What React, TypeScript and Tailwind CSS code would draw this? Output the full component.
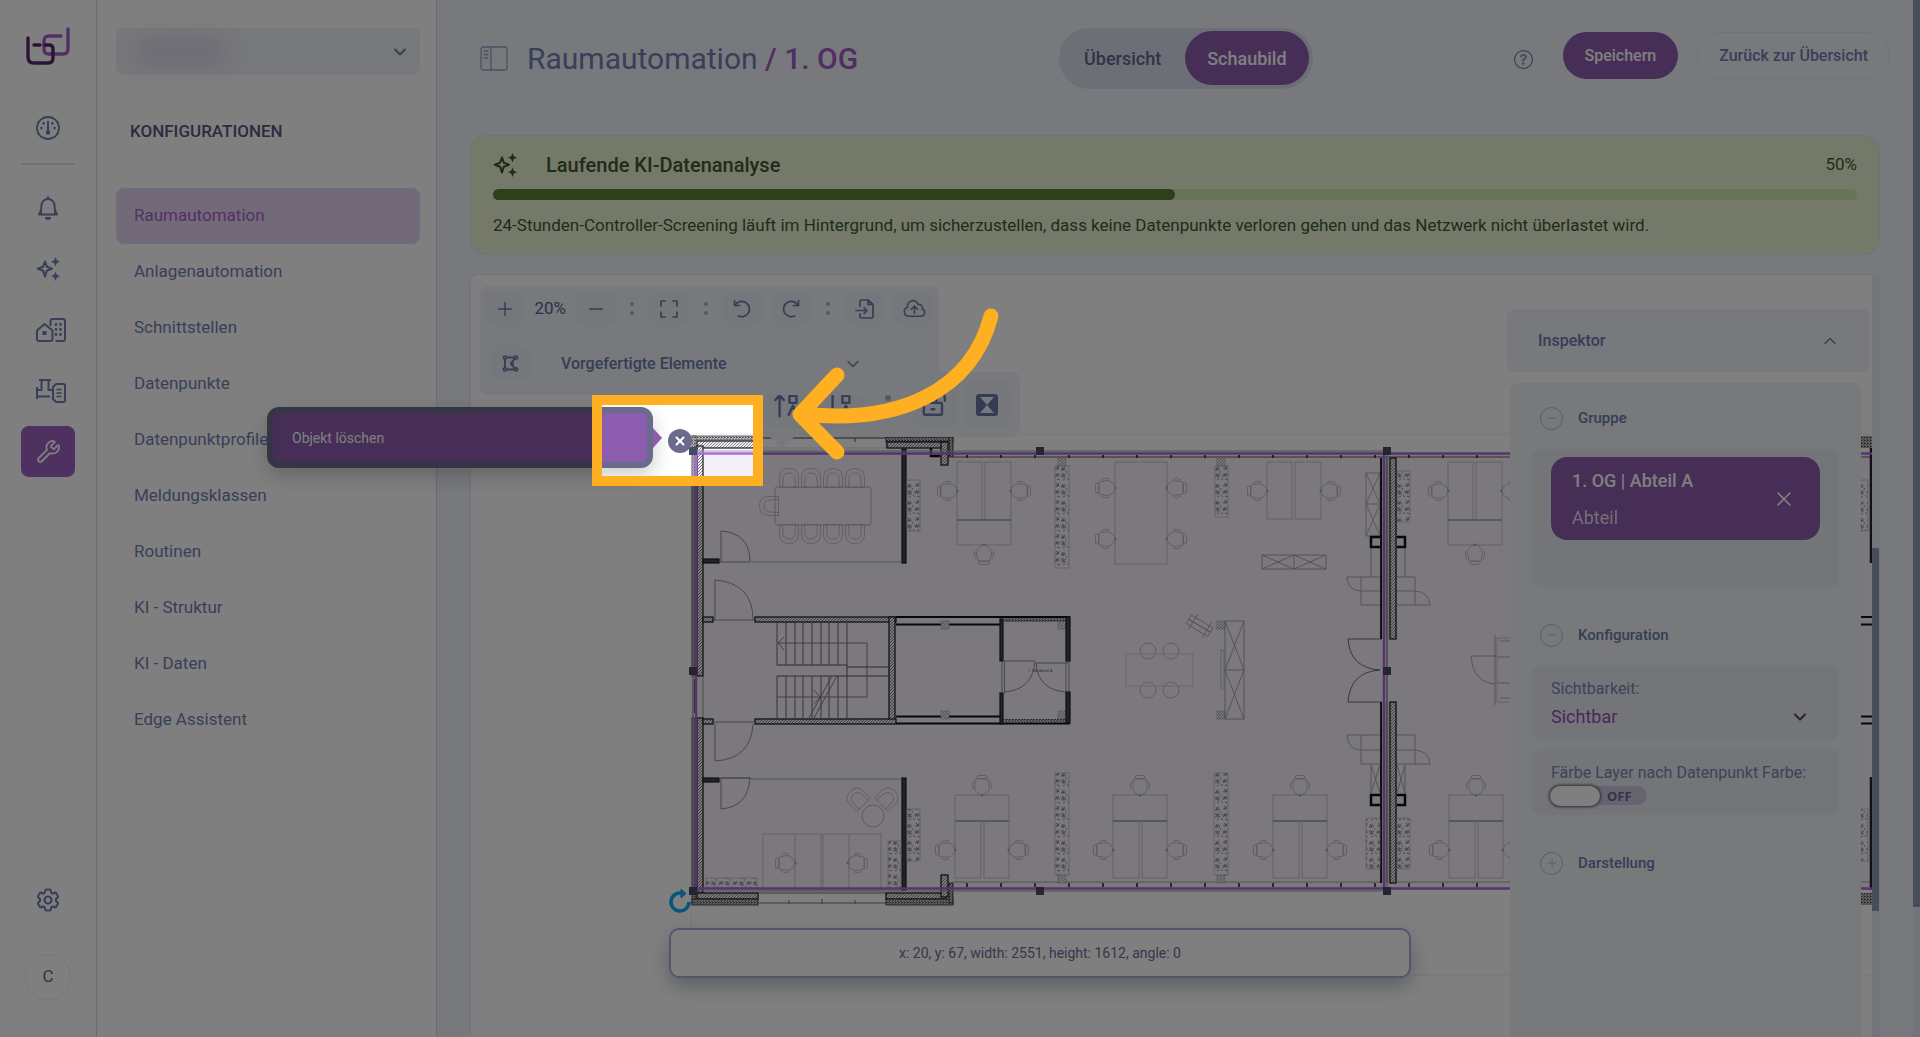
import type { ReactNode } from "react";
import { Wrench, ChevronDown, ChevronUp, X, Plus, Minus } from "lucide-react";
import { HiOutlineCog6Tooth, HiOutlineCloudArrowUp } from "react-icons/hi2";
import { BsQuestionCircle } from "react-icons/bs";

const navItems = [
  "Raumautomation",
  "Anlagenautomation",
  "Schnittstellen",
  "Datenpunkte",
  "Datenpunktprofile",
  "Meldungsklassen",
  "Routinen",
  "KI - Struktur",
  "KI - Daten",
  "Edge Assistent",
];

/* ---------- icons ---------- */

function Logo() {
  return (
    <svg width="46" height="40" viewBox="0 0 46 40" fill="none" strokeWidth="3.4" strokeLinecap="round" strokeLinejoin="round">
      <path d="M43 2v20q0 5-5 5H24q-5 0-5-5v-8q0-5 5-5h12" stroke="#a05fc6" />
      <path d="M3 11v19q0 6 6 6h14q5 0 5-5V22q0-4-4-4H20M9 18h6" stroke="#56286e" />
    </svg>
  );
}

function GaugeIcon() {
  return (
    <svg width="24" height="24" viewBox="0 0 24 24" fill="none" stroke="currentColor" strokeWidth="1.8">
      <circle cx="12" cy="12" r="11" />
      <path d="M12 5v10" strokeWidth="2" />
      <circle cx="12" cy="16.5" r="2.3" fill="currentColor" stroke="none" />
      <g fill="currentColor" stroke="none">
        <circle cx="7.6" cy="7.4" r="1.3" />
        <circle cx="16.4" cy="7.4" r="1.3" />
        <circle cx="5.4" cy="12" r="1.3" />
        <circle cx="18.6" cy="12" r="1.3" />
      </g>
    </svg>
  );
}

function BellIcon() {
  return (
    <svg width="24" height="24" viewBox="0 0 24 24" fill="none" stroke="currentColor" strokeWidth="2" strokeLinejoin="round" strokeLinecap="round">
      <path d="M3 18.500h18M5 18v-3.500l.5-5a6.500 6.500 0 0 1 13 0l.5 5V18M5 14.500L3 18.500M19 14.500l2 4M12 3V1.200" />
      <path d="M9 21h6a3 3 0 0 1-6 0z" fill="currentColor" stroke="none" />
    </svg>
  );
}

function SparkleIcon() {
  return (
    <svg width="24" height="24" viewBox="0 0 24 24" fill="none">
      <path d="M9 4.500l1.800 5.200 5.200 2-5.200 2L9 19.500l-1.900-5.800-5.300-2 5.300-2z" stroke="currentColor" strokeWidth="2.100" strokeLinejoin="round" />
      <path d="M19.500 0l1.400 3.300 3.100 1.400-3.100 1.400-1.400 3.300-1.400-3.300-3.100-1.400 3.100-1.400zM19.500 14.500l1.400 3.300 3.100 1.400-3.100 1.400-1.400 3.300-1.400-3.300-3.100-1.400 3.100-1.400z" fill="currentColor" />
    </svg>
  );
}

function HomeIcon() {
  return (
    <svg width="30" height="24" viewBox="0 0 30 24" fill="none" stroke="currentColor" strokeWidth="2" strokeLinejoin="round">
      <path d="M1 21V12.500L8.500 6l8 6.500V21q0 2-2 2H3q-2 0-2-2z" />
      <path d="M14.500 8V3q0-2 2-2H27q2 0 2 2v18q0 2-2 2h-7.500" />
      <path d="M6.500 13h4v4h-4z" fill="currentColor" stroke="none" />
      <path d="M20 5v13M24.500 5v13" strokeDasharray="2.800 2.200" strokeWidth="2.400" />
    </svg>
  );
}

function ValveIcon() {
  return (
    <svg width="30" height="24" viewBox="0 0 30 24" fill="none" stroke="currentColor" strokeWidth="2" strokeLinejoin="round">
      <path d="M3 1h12M5.500 1v10H1M12.500 1v10H16M1 8v12M1 17.500h13" />
      <path d="M20 5h7q2 0 2 2v14q0 2-2 2h-7l-3-3V8z" />
      <path d="M20.500 10.500h5M20.500 14h5M20.500 17.500h5" strokeWidth="1.500" />
    </svg>
  );
}

function PanelIcon() {
  return (
    <svg width="28" height="25" viewBox="0 0 28 25" fill="none" stroke="currentColor" strokeWidth="1.300">
      <rect x="1" y="1" width="26" height="23" rx="2.500" />
      <path d="M11 1v23M3.500 5h5M3.500 8.500h5M3.500 12h5" />
    </svg>
  );
}

function Stroke({ children, size = 20 }: { children: ReactNode; size?: number }) {
  return (
    <svg width={size} height={size} viewBox="0 0 20 20" fill="none" stroke="currentColor" strokeWidth="1.700" strokeLinecap="round" strokeLinejoin="round">
      {children}
    </svg>
  );
}

/* ---------- floor plan ---------- */

function Chair({ x, y, r = 0 }: { x: number; y: number; r?: number }) {
  return (
    <g transform={`translate(${x} ${y}) rotate(${r})`} fill="none" stroke="#b4b0ba" strokeWidth="0.800">
      <path d="M-6 -7h12l1.500 8q-1 7-7.500 8q-6.500-1-7.500-8z" />
      <rect x="-5" y="-10.500" width="10" height="3" rx="1.500" />
      <path d="M-8-5q-3 3-1 8M8-5q3 3 1 8" />
      <circle cx="0" cy="9.500" r="0.800" fill="#777" />
    </g>
  );
}

function Seat({ x, y, r = 0 }: { x: number; y: number; r?: number }) {
  return (
    <g transform={`translate(${x} ${y}) rotate(${r})`} fill="none" stroke="#b8b4be" strokeWidth="0.800">
      <path d="M-9.500 9.500V0q0-9.500 9.500-9.500T9.500 0v9.500z" />
      <path d="M-6.500 9.500L-6 1q0-6 6-6t6 6l.5 8.500" />
    </g>
  );
}

function Plant({ x, y, w, h }: { x: number; y: number; w: number; h: number }) {
  return <rect x={x} y={y} width={w} height={h} fill="url(#leaves)" stroke="#bab6c0" strokeWidth="0.700" />;
}

function Box({ x, y, w, h }: { x: number; y: number; w: number; h: number }) {
  return <rect x={x} y={y} width={w} height={h} fill="none" stroke="#c2bec8" strokeWidth="0.900" />;
}

function Wall({ x, y, w, h }: { x: number; y: number; w: number; h: number }) {
  return <rect x={x} y={y} width={w} height={h} fill="url(#hatch)" stroke="#26242a" strokeWidth="1.300" />;
}

function Dark({ x, y, w, h }: { x: number; y: number; w: number; h: number }) {
  return <rect x={x} y={y} width={w} height={h} fill="#4a474e" stroke="#1f1d23" strokeWidth="1.200" />;
}

function Pillar({ x, y }: { x: number; y: number }) {
  return <rect x={x} y={y} width="8" height="8" fill="url(#softHatch)" stroke="#aaa7ae" strokeWidth="0.600" />;
}

function DeskGroupTop({ x, y }: { x: number; y: number }) {
  return (
    <g>
      <Box x={x} y={y} w={25} h={58} />
      <Box x={x + 28} y={y} w={26} h={58} />
      <Box x={x} y={y + 58} w={54} h={25} />
      <path d={`M${x} ${y + 58}h54`} stroke="#8f8c94" strokeWidth="0.900" />
      <Chair x={x - 9} y={y + 29} r={-90} />
      <Chair x={x + 63} y={y + 29} r={90} />
      <Chair x={x + 27} y={y + 92} r={180} />
    </g>
  );
}

function DeskGroupBottom({ x, y }: { x: number; y: number }) {
  return (
    <g>
      <Box x={x} y={y} w={54} h={26} />
      <Box x={x} y={y + 26} w={26} h={57} />
      <Box x={x + 29} y={y + 26} w={25} h={57} />
      <path d={`M${x} ${y + 26}h54`} stroke="#8f8c94" strokeWidth="0.900" />
      <Chair x={x + 27} y={y - 9} />
      <Chair x={x - 9} y={y + 55} r={-90} />
      <Chair x={x + 63} y={y + 55} r={90} />
    </g>
  );
}

const topTicks = Array.from({ length: 27 }, (_, i) => 967 + i * 34);
const stairs = [777, 786, 795, 803, 812, 821, 829, 838, 847];
const handles = [
  [693, 451], [1040, 451], [1387, 451],
  [693, 671], [1387, 671],
  [693, 891], [1040, 891], [1387, 891],
];

function FloorPlan() {
  return (
    <svg className="absolute left-0 top-0" width="1401" height="762" viewBox="471 275 1401 762" role="img" aria-label="Grundriss 1. OG">
      <defs>
        <pattern id="hatch" width="3" height="3" patternUnits="userSpaceOnUse">
          <rect width="3" height="3" fill="#f0eff2" />
          <path d="M0 3L3 0" stroke="#66636a" strokeWidth="0.800" />
        </pattern>
        <pattern id="softHatch" width="3" height="3" patternUnits="userSpaceOnUse">
          <rect width="3" height="3" fill="#eeebf2" />
          <path d="M0 3L3 0" stroke="#96939b" strokeWidth="0.800" />
        </pattern>
        <pattern id="dense" width="3" height="3" patternUnits="userSpaceOnUse">
          <rect width="3" height="3" fill="#cfcdd2" />
          <path d="M0 1h2M1 2.500h2" stroke="#4c4a50" strokeWidth="0.900" />
        </pattern>
        <pattern id="leaves" width="14" height="17" patternUnits="userSpaceOnUse" patternTransform="translate(3 5)">
          <path
            d="M3 2l3 3M6 2L4 6M2 5l4-1M9 3l2 4M12 3l-4 3M8 6l5-1M3 9l2 4M6 9l-4 4M1 11l6 0M10 9l1 5M13 10l-5 3M8 10l5 3M4 15l3 1M12 15l-2 1M0 14l2 2M13 7l1 2"
            stroke="#8a8790"
            strokeWidth="0.900"
            fill="none"
          />
        </pattern>
      </defs>

      {/* page frame */}
      <path d="M691 975V434H1872M691 975H1872" fill="none" stroke="#f0eff1" />
      <rect x="696" y="453" width="1176" height="435" fill="#f6f0fc" />

      {/* outer walls */}
      <rect x="692" y="436" width="66" height="4" fill="url(#dense)" stroke="#444" strokeWidth="0.800" />
      <Wall x={697} y={441} w={61} h={7} />
      <rect x="692" y="436" width="4" height="240" fill="url(#dense)" stroke="#444" strokeWidth="0.800" />
      <Wall x={697} y={446} w={6} h={230} />
      <rect x="758" y="438" width="128" height="10" fill="#fff" stroke="#bbb" strokeWidth="0.600" />
      <path d="M758 438h128M855 438v4" stroke="#555" />
      <rect x="886" y="437" width="67" height="5" fill="url(#dense)" stroke="#333" strokeWidth="0.800" />
      <Wall x={887} y={442} w={60} h={6} />
      <Wall x={941} y={442} w={7} h={23} />
      <rect x="949" y="437" width="4" height="20" fill="url(#dense)" stroke="#333" strokeWidth="0.800" />
      <path d="M931 448v8h9" fill="none" stroke="#111" strokeWidth="2.500" />
      <path d="M693 676v42M703 676v42" stroke="#999" />
      <path d="M695 679v34" stroke="#333" strokeWidth="1.500" />
      <rect x="692" y="718" width="4" height="186" fill="url(#dense)" stroke="#444" strokeWidth="0.800" />
      <Wall x={697} y={718} w={6} h={175} />
      <Wall x={697} y={893} w={61} h={6} />
      <rect x="692" y="899" width="66" height="6" fill="url(#dense)" stroke="#333" strokeWidth="0.800" />
      <path d="M758 903h128M758 893h128M789 900v4M822 899v5M855 900v4" stroke="#777" />
      <Wall x={886} y={893} w={60} h={6} />
      <rect x="886" y="899" width="67" height="6" fill="url(#dense)" stroke="#333" strokeWidth="0.800" />
      <Wall x={941} y={875} w={7} h={22} />
      <rect x="949" y="883" width="4" height="20" fill="url(#dense)" stroke="#333" strokeWidth="0.800" />

      {/* façade */}
      <path d="M953 457H1872" stroke="#66636a" />
      <path d="M953 882H1872" stroke="#aaa7ae" />
      {topTicks.map((x) => (
        <path key={x} d={`M${x} 455v3M${x} 883v4`} stroke="#222" strokeWidth="1.500" />
      ))}

      {/* meeting room */}
      <Dark x={902} y={449} w={4} h={114} />
      <Dark x={703} y={559} w={16} h={4} />
      <path d="M751 562H901M751 779H901" stroke="#8fb0bd" />
      <path d="M721 562V531q29 2 29 31M720 562h30" fill="none" stroke="#88858c" strokeWidth="0.900" />
      <rect x="775" y="487" width="96" height="38" rx="2" fill="none" stroke="#b8b4be" />
      {[789, 811, 833, 855].map((x) => (
        <g key={x}>
          <Seat x={x} y={478} />
          <Seat x={x} y={534} r={180} />
        </g>
      ))}
      <Seat x={769} y={506} r={-90} />
      <Plant x={907} y={480} w={13} h={51} />

      {/* core */}
      <path d="M715 620V580q38 3 38 40M713 620h42" fill="none" stroke="#88858c" strokeWidth="0.900" />
      <Wall x={703} y={617} w={10} h={5} />
      <Wall x={755} y={617} w={141} h={5} />
      <Wall x={889} y={617} w={6} h={106} />
      <Wall x={703} y={719} w={10} h={5} />
      <Wall x={755} y={719} w={141} h={5} />
      <path d="M715 724V761q36-2 38-37M713 722h42" fill="none" stroke="#88858c" strokeWidth="0.900" />
      {stairs.map((x) => (
        <path key={x} d={`M${x} 623v42M${x} 676v42`} stroke="#5d5a62" strokeWidth="0.900" />
      ))}
      <path d="M777 665H847V676M777 676H889M847 667H889" fill="none" stroke="#5d5a62" />
      <path d="M784 637l-6 6 6 7M778 643H867V697H777M814 690l6 7-6 7M809 718L832 676M814 718L837 676" fill="none" stroke="#77747c" strokeWidth="0.900" />
      <path d="M896 617H1070M896 624.500H1002M896 716.500H1002M896 723.500H1070" stroke="#111" strokeWidth="2.200" />
      <Pillar x={941} y={621} />
      <Pillar x={941} y={711} />
      <Pillar x={1058} y={621} />
      <Pillar x={1058} y={711} />
      <rect x="1004" y="618" width="62" height="4" fill="url(#dense)" />
      <rect x="1004" y="719" width="62" height="4" fill="url(#dense)" />
      <Dark x={1000} y={619} w={3} h={42} />
      <Dark x={1000} y={693} w={3} h={31} />
      <Dark x={1066} y={617} w={4} h={44} />
      <Dark x={1066} y={692} w={4} h={31} />
      <path d="M1002 661v32M1004.500 661v32M1066 662v30M1069 662v30" stroke="#88858c" strokeWidth="0.900" />
      <path d="M1004 661H1035q-2 29-31 31M1036 663H1068M1036 663q2 27 30 29" fill="none" stroke="#88858c" strokeWidth="0.900" />
      <text x="1028" y="672" fontSize="4" fill="#54525a">1. OG Abteil A</text>

      {/* lower left room */}
      <Dark x={703} y={778} w={16} h={4} />
      <Dark x={902} y={778} w={4} h={112} />
      <path d="M721 778V809q27-2 29-31zM720 778h31" fill="none" stroke="#88858c" strokeWidth="0.900" />
      <circle cx="873" cy="816" r="11" fill="none" stroke="#b4b0ba" strokeWidth="0.900" />
      <Seat x={857} y={798} r={-45} />
      <Seat x={888} y={798} r={45} />
      <Box x={763} y={834} w={58} h={56} />
      <Box x={823} y={834} w={58} h={56} />
      <path d="M795 834v56M849 834v56" stroke="#c2bec8" strokeWidth="0.900" />
      <Chair x={786} y={863} r={-90} />
      <Chair x={857} y={863} r={90} />
      <Plant x={888} y={841} w={13} h={49} />
      <Plant x={706} y={878} w={51} h={11} />
      <Plant x={907} y={809} w={13} h={52} />

      {/* open office, upper row */}
      <DeskGroupTop x={957} y={462} />
      <Pillar x={1058} y={458} />
      <Plant x={1055} y={466} w={14} h={102} />
      <Box x={1115} y={462} w={52} h={102} />
      <Chair x={1106} y={488} r={-90} />
      <Chair x={1176} y={488} r={90} />
      <Chair x={1106} y={539} r={-90} />
      <Chair x={1176} y={539} r={90} />
      <Pillar x={1217} y={458} />
      <Plant x={1215} y={466} w={13} h={51} />
      <Box x={1267} y={462} w={25} h={57} />
      <Box x={1295} y={462} w={26} h={57} />
      <Chair x={1258} y={491} r={-90} />
      <Chair x={1330} y={491} r={90} />
      <path d="M1366 473h14v63h-14zM1366 504h14M1366 473l14 31-14 32M1380 473l-14 31 14 32" fill="none" stroke="#a4a1a8" strokeWidth="0.800" />
      <path d="M1262 555h64v14h-64zM1294 555v14M1262 555l32 14 32-14M1262 569l32-14 32 14" fill="none" stroke="#98959c" strokeWidth="0.800" />
      <Plant x={1397} y={471} w={13} h={51} />
      <DeskGroupTop x={1448} y={462} />

      {/* open office, middle */}
      <rect x="1126" y="654" width="67" height="32" fill="none" stroke="#d0ccd6" strokeWidth="0.900" />
      {[[1148, 651], [1171, 651], [1148, 690], [1171, 690]].map(([cx, cy]) => (
        <circle key={`${cx}-${cy}`} cx={cx} cy={cy} r="8" fill="none" stroke="#bab6c0" strokeWidth="0.900" />
      ))}
      <g transform="translate(1200 626) rotate(31)" fill="none" stroke="#a8a5ac" strokeWidth="0.800">
        <rect x="-13" y="-5" width="25" height="5" />
        <rect x="-13" y="0" width="25" height="5" />
        <path d="M-8-9V9M8-9V9" />
      </g>
      <Pillar x={1217} y={621} />
      <Pillar x={1217} y={711} />
      <path d="M1225 621h19v98h-19zM1225 670h19M1225 621l19 49-19 49M1244 621l-19 49 19 49" fill="none" stroke="#98959c" strokeWidth="0.800" />
      <Box x={1221} y={650} w={3} h={38} />
      <path d="M1495 635v70M1471 656h25M1471 656q2 26 24 28" fill="none" stroke="#a4a1a8" strokeWidth="0.900" />
      <Box x={1497} y={638} w={20} h={64} />
      <path d="M1500 641h12M1497 657h14M1497 683h14M1500 698h12" stroke="#a4a1a8" strokeWidth="0.900" />

      {/* dividing wall */}
      <path d="M1371 537h34v10h-34zM1371 795h34v10h-34z" fill="none" stroke="#111" strokeWidth="2.500" />
      <path d="M1361 577h54v28h-54zM1347 577h14M1347 577q1 14 14 14h54q14 1 15 14h-15M1371 548v29M1405 548v29" fill="none" stroke="#a4a1a8" strokeWidth="0.900" />
      <path d="M1361 735h54v29h-54zM1347 735h14M1347 735q1 15 14 15h54q14 1 15 14h-15M1371 765v29M1405 765v29M1371 765l9 28M1380 765l-9 28M1397 765l8 28M1405 765l-8 28" fill="none" stroke="#a4a1a8" strokeWidth="0.900" />
      <path d="M1382 639h-34q2 29 32 31q-30 2-32 32h34" fill="none" stroke="#66636a" strokeWidth="0.900" />
      <g>
        <rect x="1380" y="458" width="17" height="181" fill="#ddd8e2" />
        <rect x="1380" y="702" width="17" height="181" fill="#ddd8e2" />
        <path d="M1381 458v181M1381 702v181" stroke="#222" strokeWidth="2" />
        <path d="M1387 458v425" stroke="#66636a" strokeWidth="1" />
        <Wall x={1390} y={458} w={6} h={181} />
        <Wall x={1390} y={702} w={6} h={181} />
      </g>

      {/* open office, lower row */}
      <DeskGroupBottom x={955} y={795} />
      <DeskGroupBottom x={1113} y={795} />
      <DeskGroupBottom x={1273} y={795} />
      <DeskGroupBottom x={1449} y={795} />
      <Plant x={1055} y={773} w={14} h={102} />
      <Plant x={1214} y={773} w={14} h={102} />
      <Pillar x={1058} y={875} />
      <Pillar x={1217} y={875} />
      <Plant x={1366} y={818} w={14} h={51} />
      <Plant x={1397} y={818} w={13} h={51} />

      {/* right edge */}
      <rect x="1858" y="436" width="14" height="12" fill="url(#dense)" />
      <rect x="1858" y="893" width="14" height="12" fill="url(#dense)" />
      <path d="M1871 448v115M1871 777v113" stroke="#222" strokeWidth="2.500" />
      <path d="M1858 617h14M1858 624.500h14M1858 716.500h14M1858 723.500h14" stroke="#111" strokeWidth="2.200" />
      <Plant x={1855} y={480} w={13} h={51} />
      <Plant x={1855} y={809} w={13} h={52} />

      {/* selection */}
      <path d="M693 451H1387V891H693z" fill="none" stroke="#9a9bb4" strokeWidth="1" />
      <path d="M696 453.500H1872M696 888.500H1872M696 453V888M1384 453V888" stroke="#aa6bd8" strokeWidth="2.500" />
      {handles.map(([x, y]) => (
        <rect key={`${x}-${y}`} x={x - 4} y={y - 4} width="8" height="8" fill="#474a66" />
      ))}
      <g fill="none" stroke="#06aef2" strokeWidth="3.500">
        <path d="M683 893.500A9 9 0 1 0 689 902" />
        <path d="M681 889l5 4.500-5 4.500z" fill="#06aef2" strokeWidth="1" />
      </g>
    </svg>
  );
}

/* ---------- toolbars ---------- */

function ToolButton({ label, children }: { label: string; children: ReactNode }) {
  return (
    <button type="button" aria-label={label} className="flex h-[35px] w-10 items-center justify-center rounded-lg bg-[#eceef4]">
      {children}
    </button>
  );
}

function Dots() {
  return (
    <span className="flex w-[34px] flex-col items-center gap-[5px]">
      <span className="size-1 rounded-full bg-[#a9b1cd]" />
      <span className="size-1 rounded-full bg-[#a9b1cd]" />
    </span>
  );
}

function ObjectToolbar() {
  const btn = "flex h-[47px] w-[46px] items-center justify-center rounded-lg bg-[#eceef4]";
  return (
    <div className="absolute left-[284px] top-[97px] flex h-[65px] w-[265px] items-center rounded-lg bg-[#f0f2f9] pl-[10px] text-[#6c7cae]">
      <button type="button" aria-label="Nach vorne" className={btn}>
        <Stroke size={28}><path d="M4 18V3M1 6.500L4 3l3 3.500M11 3.500h5v5h-5zM10.500 17l3-6.500 3 6.500" /></Stroke>
      </button>
      <button type="button" aria-label="Nach hinten" className={btn + " ml-[7px]"}>
        <Stroke size={28}><path d="M4 3v14M1.500 14.500L4 17.500l2.500-3M11 3.500h5v5h-5zM10.500 17l3-6.500 3 6.500" /></Stroke>
      </button>
      <span className="flex w-[48px] flex-col items-center gap-2">
        <span className="size-[6px] rounded-full bg-[#a9b1cd]" />
        <span className="size-[6px] rounded-full bg-[#a9b1cd]" />
      </span>
      <button type="button" aria-label="Entsperren" className={btn}>
        <Stroke size={28}><path d="M3 8.500h11q1 0 1 1V16q0 1-1 1H3q-1 0-1-1V9.500q0-1 1-1zM11 8V4.500a3 3 0 0 1 6 0V7M7.500 13h2" /></Stroke>
      </button>
      <button type="button" aria-label="Spiegeln" className={btn + " ml-[6px]"}>
        <svg width="22" height="22" viewBox="0 0 22 22">
          <rect width="22" height="22" rx="3" fill="#6878aa" />
          <path d="M4 3h14l-7 8zM4 19h14l-7-8z" fill="#f0f2f9" />
        </svg>
      </button>
      <span className="absolute left-[15px] top-full border-x-[12px] border-t-[12px] border-x-transparent border-t-[#f0f2f9]" />
    </div>
  );
}

function MainToolbar() {
  return (
    <div className="absolute left-[9px] top-[11px] h-[109px] w-[459px] rounded-lg bg-[#f0f2f9] px-[5px] pt-[5px] text-[#6c7cae]">
      <div className="flex items-center">
        <ToolButton label="Vergrößern"><Plus size={22} strokeWidth={1.6} /></ToolButton>
        <span className="w-[52px] text-center text-[17px] text-[#5c6290]">20%</span>
        <ToolButton label="Verkleinern"><Minus size={22} strokeWidth={1.6} /></ToolButton>
        <Dots />
        <ToolButton label="Vollbild">
          <Stroke><path d="M2 7V2h4M14 2h4v5M18 13v5h-4M6 18H2v-5" /></Stroke>
        </ToolButton>
        <Dots />
        <div className="flex gap-[9px]">
          <ToolButton label="Rückgängig">
            <Stroke><path d="M2.500 1.500v5h5M3 6.300A7.700 7.700 0 1 1 6.500 17" /></Stroke>
          </ToolButton>
          <ToolButton label="Wiederholen">
            <Stroke><path d="M17.500 1.500v5h-5M17 6.300A7.700 7.700 0 1 0 13.500 17" /></Stroke>
          </ToolButton>
        </div>
        <Dots />
        <div className="flex gap-[9px]">
          <ToolButton label="Importieren">
            <Stroke><path d="M5 7V2.500Q5 1 6.500 1H13l5 4.500v12Q18 19 16.500 19h-10Q5 19 5 17.500V15M13 1v4.500h5M1 11.500h11M9 8.500l3 3-3 3" /></Stroke>
          </ToolButton>
          <ToolButton label="Hochladen"><HiOutlineCloudArrowUp size={25} /></ToolButton>
        </div>
      </div>
      <div className="mt-5 flex items-center pl-[5px]">
        <ToolButton label="Polygon">
          <Stroke size={17}>
            <path d="M4 3h12M4 17h12M3.500 4v12M15.500 4L11 9v2l4.500 5" strokeWidth="2.200" />
            <g strokeWidth="2" fill="#eceef4">
              <circle cx="3.500" cy="3" r="1.800" />
              <circle cx="16.500" cy="3" r="1.800" />
              <circle cx="3.500" cy="17" r="1.800" />
              <circle cx="16.500" cy="17" r="1.800" />
              <circle cx="12" cy="10" r="1.200" />
            </g>
          </Stroke>
        </ToolButton>
        <button type="button" className="ml-[31px] flex w-[302px] items-center justify-between text-base font-medium">
          Vorgefertigte Elemente
          <ChevronDown size={20} strokeWidth={1.6} />
        </button>
      </div>
    </div>
  );
}

/* ---------- inspector ---------- */

function SectionTitle({ open, children }: { open: boolean; children: ReactNode }) {
  return (
    <button type="button" aria-expanded={open} className="flex h-6 items-center gap-[15px] pl-[30px] text-[15px] font-medium text-[#6b7aae]">
      <span className="flex size-[23px] items-center justify-center rounded-full border border-[#b8b9d6] text-[#b8b9d6]">
        {open ? <Minus size={14} strokeWidth={1.600} /> : <Plus size={14} strokeWidth={1.600} />}
      </span>
      {children}
    </button>
  );
}

function Inspector() {
  return (
    <aside className="absolute bottom-0 right-0 top-[34px] flex w-[365px] flex-col">
      <button type="button" className="mr-[2px] flex h-[63px] items-center justify-between rounded-lg bg-[#f0f2f9] pl-[31px] pr-[30px] text-base font-medium text-[#6b7aae]">
        Inspektor
        <ChevronUp size={20} strokeWidth={1.600} />
      </button>
      <div className="ml-[3px] mr-[11px] mt-[11px] flex flex-1 flex-col rounded-t-lg bg-[#f0f2f7] pt-[23px]">
        <SectionTitle open>Gruppe</SectionTitle>
        <div className="mx-[22px] mt-[19px] h-[138px] rounded-lg bg-[#e9ebf0] px-[19px] pt-2">
          <div className="flex h-[83px] items-center justify-between rounded-2xl bg-[#8d5cac] pl-[21px] pr-6 text-white">
            <div className="text-[18px] leading-[37px]">
              <p className="font-medium">1. OG | Abteil A</p>
              <p className="opacity-80">Abteil</p>
            </div>
            <button type="button" aria-label="Entfernen"><X size={24} strokeWidth={1.700} /></button>
          </div>
        </div>
        <div className="mt-[36px] flex"><SectionTitle open>Konfiguration</SectionTitle></div>
        <div className="mx-[22px] mt-[18px] h-[75px] rounded-lg bg-[#e9ebf0] px-[19px] pt-3">
          <label htmlFor="visibility" className="block text-[16px] leading-6 text-[#7885b2]">Sichtbarkeit:</label>
          <div className="relative">
            <select id="visibility" className="h-8 w-full appearance-none bg-transparent text-[18px] leading-7 text-[#9350b0]">
              <option>Sichtbar</option>
            </select>
            <ChevronDown size={20} strokeWidth={2.600} className="pointer-events-none absolute right-[10px] top-[6px] text-[#555]" />
          </div>
        </div>
        <div className="mx-[22px] mt-[9px] h-[66px] rounded-lg bg-[#e9ebf0] px-[19px] pt-3">
          <label className="block text-[16px] leading-6 text-[#7885b2]">
            Färbe Layer nach Datenpunkt Farbe:
            <input type="checkbox" className="sr-only" />
            <span className="-ml-[1px] mt-[1px] flex h-[19px] w-[97px] items-center rounded-full bg-[#cdc8e2]">
              <span className="h-[20px] w-[50px] rounded-full bg-white shadow-[0_0_3px_1px_#555]" />
              <span className="ml-[7px] font-['Open_Sans',sans-serif] text-[13px] font-bold text-[#696a8c]">OFF</span>
            </span>
          </label>
        </div>
        <div className="mt-[36px] flex"><SectionTitle open={false}>Darstellung</SectionTitle></div>
      </div>
    </aside>
  );
}

/* ---------- page ---------- */

export default function App() {
  const railBtn = "flex h-[51px] w-[54px] items-center justify-start rounded-lg pl-[15px]";
  return (
    <div className="relative flex h-screen overflow-hidden bg-[#f0f2fa] font-[Roboto,sans-serif] text-[#7080ae]">
      {/* icon rail */}
      <nav aria-label="Hauptmenü" className="flex w-[97px] shrink-0 flex-col items-center border-r border-[#d3daee] bg-white">
        <div className="mt-[27px]"><Logo /></div>
        <button type="button" aria-label="Dashboard" className={railBtn + " mt-[35px]"}><GaugeIcon /></button>
        <hr className="mt-[10px] w-[54px] border-t-2 border-[#dce3ee]" />
        <div className="mt-[17px] flex flex-col gap-[10px]">
          <button type="button" aria-label="Meldungen" className={railBtn}><BellIcon /></button>
          <button type="button" aria-label="KI" className={railBtn}><SparkleIcon /></button>
          <button type="button" aria-label="Gebäude" className={railBtn}><HomeIcon /></button>
          <button type="button" aria-label="Anlagen" className={railBtn}><ValveIcon /></button>
          <button type="button" aria-label="Konfigurationen" className={railBtn + " bg-[#9c63c0] text-white"}>
            <Wrench size={25} strokeWidth={1.800} />
          </button>
        </div>
        <button type="button" aria-label="Einstellungen" className="mt-auto"><HiOutlineCog6Tooth size={28} strokeWidth={1.900} /></button>
        <button type="button" className="mb-[37px] mt-[40px] size-[46px] rounded-full border border-[#eceef2] text-[17px] text-[#5f6386]">C</button>
      </nav>

      {/* section menu */}
      <nav aria-label="Konfigurationen" className="flex w-[340px] shrink-0 flex-col border-r border-[#d3daee] bg-white pl-[19px] pr-4 pt-7">
        <button type="button" aria-label="Liegenschaft wählen" className="flex h-[47px] items-center justify-between rounded-lg bg-[#eef1f8] pl-4 pr-[10px]">
          <span className="h-7 w-24 rounded-full bg-[#ddd5e8] blur-md" />
          <ChevronDown size={20} strokeWidth={2.400} />
        </button>
        <h2 className="mt-[44px] px-[14px] text-[17px] font-medium leading-6 text-[#56587e]">KONFIGURATIONEN</h2>
        <ul className="mt-[45px]">
          {navItems.map((item, i) => (
            <li key={item}>
              <a
                href="#"
                className={
                  i === 0
                    ? "flex h-14 items-center rounded-lg bg-[#e6d4f2] px-[18px] text-[17px] text-[#a463c8]"
                    : "flex h-14 items-center rounded-lg px-[18px] text-[17px]"
                }
              >
                {item}
              </a>
            </li>
          ))}
        </ul>
      </nav>

      <main className="flex min-w-0 flex-1 flex-col">
        <header className="flex h-[116px] shrink-0 items-center justify-between pl-[43px] pr-[23px]">
          <div className="flex items-center gap-[19px]">
            <button type="button" aria-label="Seitenleiste" className="text-[#93a1c8]"><PanelIcon /></button>
            <h1 className="text-[30px]">
              Raumautomation <span className="font-medium text-[#a25cc4]">/ 1. OG</span>
            </h1>
          </div>
          <div className="flex h-[61px] items-center rounded-full bg-[#dadfed] pl-[25px] pr-1 text-[18px] font-medium">
            <button type="button" className="pr-[24px] text-[#62668e]">Übersicht</button>
            <button type="button" className="h-[54px] rounded-full bg-[#8f5cae] px-[22px] text-white">Schaubild</button>
          </div>
          <div className="mt-8 flex items-center self-start text-base font-medium">
            <button type="button" aria-label="Hilfe" className="mt-2"><BsQuestionCircle size={19} /></button>
            <button type="button" className="ml-[30px] h-[47px] rounded-full bg-[#8f5cae] px-[22px] text-white">Speichern</button>
            <button type="button" className="ml-[19px] h-[47px] rounded-full border border-[#e4e7f0] px-[21px]">Zurück zur Übersicht</button>
          </div>
        </header>

        <section className="mx-[33px] mt-[19px] shrink-0 rounded-2xl border border-[#e2e6e0] bg-[#eaf2d4] px-[22px] pb-[18px] pt-[15px] text-[#3f5a30]">
          <div className="flex h-7 items-center">
            <SparkleIcon />
            <h2 className="ml-[29px] text-[20px] font-medium">Laufende KI-Datenanalyse</h2>
            <span className="ml-auto text-[17px]">50%</span>
          </div>
          <div className="mt-[10px] h-[11px] rounded-full bg-[#cfe8b0]">
            <div className="h-full w-1/2 rounded-full bg-[#5a8032]" />
          </div>
          <p className="mt-[14px] text-[17px] leading-[22px]">
            24-Stunden-Controller-Screening läuft im Hintergrund, um sicherzustellen, dass keine Datenpunkte verloren gehen und das Netzwerk nicht überlastet wird.
          </p>
        </section>

        <section className="mx-[33px] mt-[19px] flex min-h-0 flex-1 rounded-t-lg border border-b-0 border-[#e4e8f4] bg-white">
          <div className="relative min-w-0 flex-1 overflow-hidden">
            <FloorPlan />
            <ObjectToolbar />
            <MainToolbar />
            <button type="button" aria-label="Objekt löschen" className="absolute left-[197px] top-[154px] flex size-6 items-center justify-center rounded-full bg-[#6a6b8d] text-white">
              <X size={14} strokeWidth={3.500} />
            </button>
            <div className="absolute left-[198px] top-[653px] flex h-[50px] w-[742px] items-center justify-center rounded-[10px] border-2 border-[#a2aed2] bg-white text-sm text-[#6a6e98] shadow-[0_8px_20px_rgba(60,70,100,0.35)]">
              x: 20, y: 67, width: 2551, height: 1612, angle: 0
            </div>
            <Inspector />
          </div>
          <div className="w-[7px] bg-[#e8eaf6] pt-[273px]">
            <div className="h-[363px] bg-[#8f9bb5]" />
          </div>
        </section>
      </main>

      <div className="w-[7px] shrink-0 bg-[#e8eaf6]">
        <div className="h-[907px] bg-[#8f9bb5]" />
      </div>

      {/* tooltip of the delete handle */}
      <div role="tooltip" className="absolute left-[267px] top-[407px] flex h-[61px] w-[386px] items-center rounded-xl border-[6px] border-[#6a6b8b] bg-[#8c5cae] pl-[19px] text-sm text-white shadow-[0_8px_20px_rgba(0,0,0,0.2)]">
        Objekt löschen
        <span className="absolute -right-[15px] border-y-[10px] border-l-[9px] border-y-transparent border-l-[#8c5cae]" />
      </div>

      {/* tour spotlight */}
      <div className="pointer-events-none absolute left-[592px] top-[395px] h-[91px] w-[171px] border-[10px] border-[#ffb022] shadow-[0_0_0_2000px_rgba(0,0,0,0.5)]" />
      <svg className="pointer-events-none absolute left-[780px] top-[300px]" width="230" height="170" viewBox="780 300 230 170" fill="none" stroke="#ffb022" strokeWidth="15" strokeLinecap="round" strokeLinejoin="round">
        <path d="M991 316C972 390 900 425 802 414M837 375L800 414.500L837 452" />
      </svg>
    </div>
  );
}
